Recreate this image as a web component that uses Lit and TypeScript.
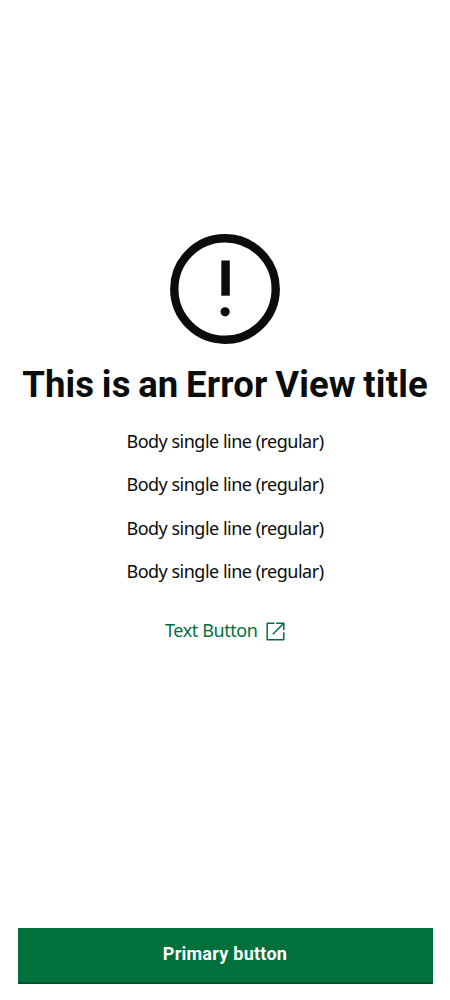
import { LitElement, html, css } from "lit";
import { customElement, property } from "lit/decorators.js";

@customElement("app-root")
export class AppRoot extends LitElement {
  @property({ attribute: false }) lines: string[] = Array(4).fill("Body single line (regular)");

  static styles = css`
    :host {
      display: flex;
      flex-direction: column;
      box-sizing: border-box;
      height: 1000px;
      padding: 234px 17.5px 16.4px;
      background: #fff;
      color: #0b0c0c;
      font-family: "Noto Sans", sans-serif;
    }
    .content {
      flex: 1;
      display: flex;
      flex-direction: column;
      align-items: center;
    }
    .alert { display: block; width: 110px; height: 110px; }
    .title {
      margin: 19px 0 0;
      font-family: Roboto, sans-serif;
      font-size: 36.5px;
      line-height: 44px;
      font-weight: 700;
      letter-spacing: 0.15px;
      word-spacing: -1.6px;
      white-space: nowrap;
    }
    .body { margin-top: 13px; }
    .line {
      margin: 0;
      font-size: 18px;
      line-height: 43.35px;
      letter-spacing: -0.5px;
      text-align: center;
      white-space: nowrap;
    }
    .link {
      display: flex;
      align-items: center;
      margin-top: 22px;
      padding: 0;
      border: 0;
      background: none;
      gap: 8.5px;
      color: #00703c;
      font: 400 18px/30px "Noto Sans", sans-serif;
      letter-spacing: -0.4px;
    }
    .open { width: 19px; height: 19px; margin-top: 2px; }
    .primary {
      box-sizing: border-box;
      height: 55.2px;
      padding: 0 0 4px;
      border: 0;
      background: #00703c;
      box-shadow: inset 0 -1.4px #044b2b;
      color: #fff;
      font: 700 18px/26px Roboto, sans-serif;
      letter-spacing: 0.25px;
    }
  `;

  render() {
    return html`
      <div class="content">
        <svg class="alert" viewBox="0 0 110 110" aria-hidden="true">
          <circle cx="55" cy="55" r="50.7" fill="none" stroke="#0b0c0c" stroke-width="8.4" />
          <rect x="51.3" y="26.5" width="8.5" height="35.2" fill="#0b0c0c" />
          <circle cx="55.1" cy="77.8" r="4.6" fill="#0b0c0c" />
        </svg>
        <h1 class="title">This is an Error View title</h1>
        <div class="body">${this.lines.map((l) => html`<p class="line">${l}</p>`)}</div>
        <button class="link">
          <span>Text Button</span>
          <svg class="open" viewBox="0 0 19 19" fill="none" stroke="#00703c" stroke-width="1.5" stroke-linejoin="round" aria-hidden="true">
            <path d="M8.5 1.2H1.2V17.8H17.8V10.2M10.2 1.2H17.8V8M17.5 1.5L6.8 12.2" />
          </svg>
        </button>
      </div>
      <button class="primary">Primary button</button>
    `;
  }
}
